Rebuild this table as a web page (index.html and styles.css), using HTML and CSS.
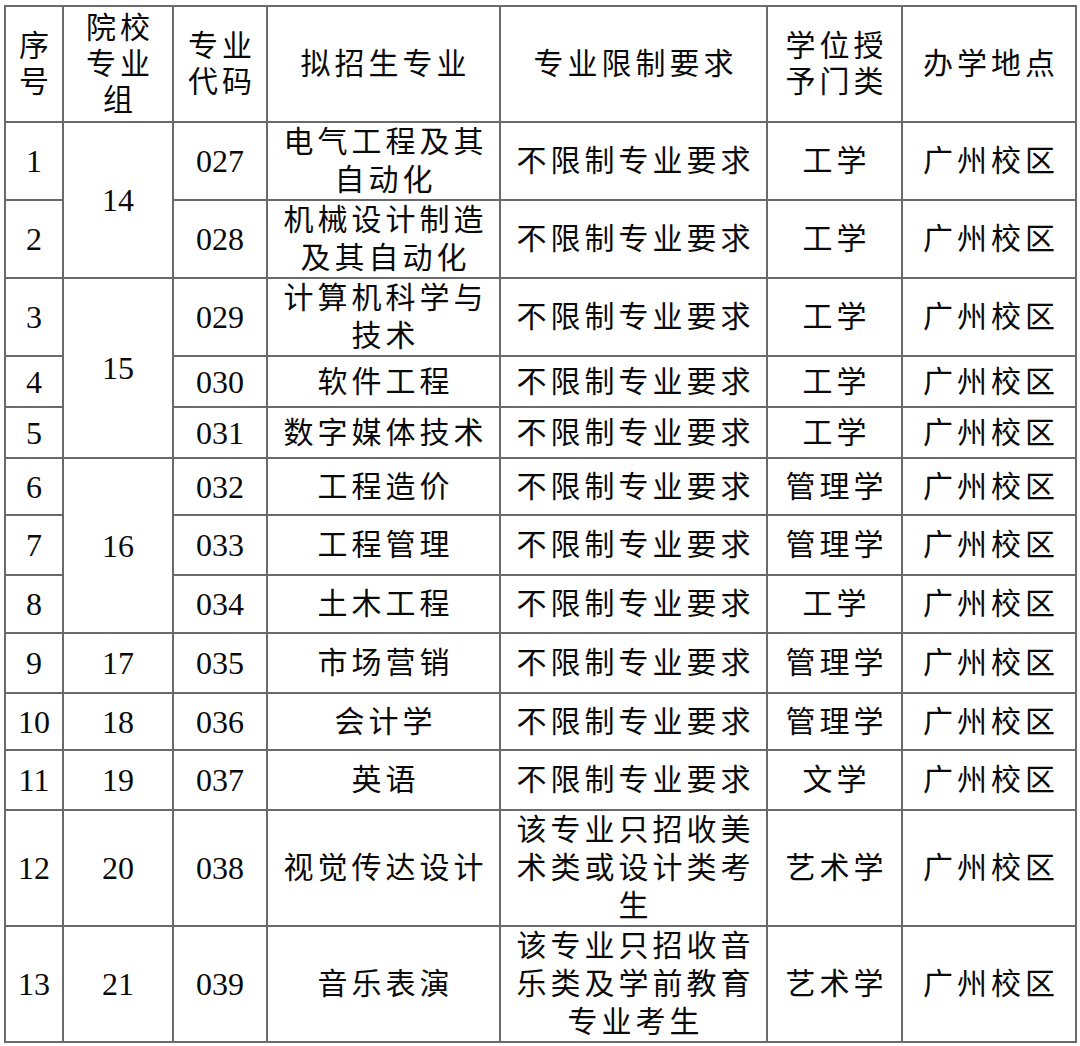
FILE: index.html
```html
<!DOCTYPE html>
<html lang="zh-CN">
<head>
<meta charset="utf-8">
<title>招生专业</title>
<link rel="stylesheet" href="styles.css">
</head>
<body>
<table class="plan">
  <colgroup>
    <col class="c-no">
    <col class="c-group">
    <col class="c-code">
    <col class="c-major">
    <col class="c-limit">
    <col class="c-degree">
    <col class="c-site">
  </colgroup>
  <thead>
    <tr class="h116">
      <th>序<br>号</th>
      <th>院校<br>专业<br>组</th>
      <th>专业<br>代码</th>
      <th>拟招生专业</th>
      <th>专业限制要求</th>
      <th>学位授<br>予门类</th>
      <th>办学地点</th>
    </tr>
  </thead>
  <tbody>
    <tr class="h77">
      <td class="num">1</td>
      <td class="num" rowspan="2">14</td>
      <td class="num">027</td>
      <td>电气工程及其自动化</td>
      <td>不限制专业要求</td>
      <td>工学</td>
      <td>广州校区</td>
    </tr>
    <tr class="h78">
      <td class="num">2</td>
      <td class="num">028</td>
      <td>机械设计制造及其自动化</td>
      <td>不限制专业要求</td>
      <td>工学</td>
      <td>广州校区</td>
    </tr>
    <tr class="h78">
      <td class="num">3</td>
      <td class="num" rowspan="3">15</td>
      <td class="num">029</td>
      <td>计算机科学与技术</td>
      <td>不限制专业要求</td>
      <td>工学</td>
      <td>广州校区</td>
    </tr>
    <tr class="h51">
      <td class="num">4</td>
      <td class="num">030</td>
      <td>软件工程</td>
      <td>不限制专业要求</td>
      <td>工学</td>
      <td>广州校区</td>
    </tr>
    <tr class="h51">
      <td class="num">5</td>
      <td class="num">031</td>
      <td>数字媒体技术</td>
      <td>不限制专业要求</td>
      <td>工学</td>
      <td>广州校区</td>
    </tr>
    <tr class="h57">
      <td class="num">6</td>
      <td class="num" rowspan="3">16</td>
      <td class="num">032</td>
      <td>工程造价</td>
      <td>不限制专业要求</td>
      <td>管理学</td>
      <td>广州校区</td>
    </tr>
    <tr class="h60">
      <td class="num">7</td>
      <td class="num">033</td>
      <td>工程管理</td>
      <td>不限制专业要求</td>
      <td>管理学</td>
      <td>广州校区</td>
    </tr>
    <tr class="h58">
      <td class="num">8</td>
      <td class="num">034</td>
      <td>土木工程</td>
      <td>不限制专业要求</td>
      <td>工学</td>
      <td>广州校区</td>
    </tr>
    <tr class="h60">
      <td class="num">9</td>
      <td class="num">17</td>
      <td class="num">035</td>
      <td>市场营销</td>
      <td>不限制专业要求</td>
      <td>管理学</td>
      <td>广州校区</td>
    </tr>
    <tr class="h57">
      <td class="num">10</td>
      <td class="num">18</td>
      <td class="num">036</td>
      <td>会计学</td>
      <td>不限制专业要求</td>
      <td>管理学</td>
      <td>广州校区</td>
    </tr>
    <tr class="h60">
      <td class="num">11</td>
      <td class="num">19</td>
      <td class="num">037</td>
      <td>英语</td>
      <td>不限制专业要求</td>
      <td>文学</td>
      <td>广州校区</td>
    </tr>
    <tr class="h116">
      <td class="num">12</td>
      <td class="num">20</td>
      <td class="num">038</td>
      <td>视觉传达设计</td>
      <td>该专业只招收美术类或设计类考生</td>
      <td>艺术学</td>
      <td>广州校区</td>
    </tr>
    <tr class="h116">
      <td class="num">13</td>
      <td class="num">21</td>
      <td class="num">039</td>
      <td>音乐表演</td>
      <td>该专业只招收音乐类及学前教育专业考生</td>
      <td>艺术学</td>
      <td>广州校区</td>
    </tr>
  </tbody>
</table>
</body>
</html>
```

FILE: styles.css
```css
html, body {
  margin: 0;
  background: #ffffff;
}

body {
  padding: 5px 0 0 4px;
}

.plan {
  border-collapse: collapse;
  table-layout: fixed;
  width: 1071px;
  color: #0a0a0a;
  font-family: "Liberation Serif", "Noto Sans CJK SC", serif;
  font-size: 30px;
  line-height: 38px;
  letter-spacing: 4px;
}

.plan thead th {
  line-height: 36px;
}

.c-no { width: 58px; }
.c-group { width: 110px; }
.c-code { width: 94px; }
.c-major { width: 233px; }
.c-limit { width: 267px; }
.c-degree { width: 135px; }
.c-site { width: 174px; }

.plan th,
.plan td {
  border: 2px solid #6a6a6a;
  padding: 0 7px 0 11px;
  text-align: center;
  vertical-align: middle;
  font-weight: normal;
  overflow: hidden;
}

.plan .num {
  font-size: 32px;
  letter-spacing: 0;
  padding: 0 4px;
}

.h116 { height: 116px; }
.h78 { height: 78px; }
.h77 { height: 77px; }
.h60 { height: 60px; }
.h58 { height: 58px; }
.h57 { height: 57px; }
.h51 { height: 51px; }
```
